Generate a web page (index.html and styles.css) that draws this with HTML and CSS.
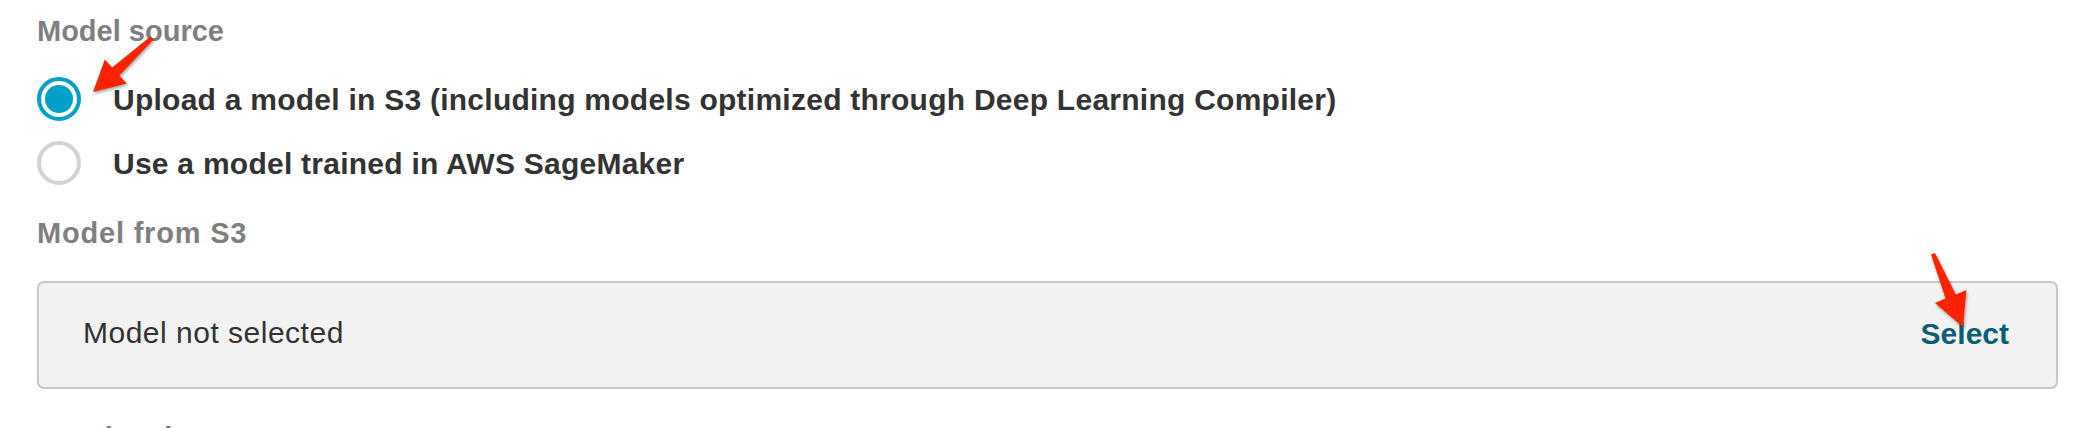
FILE: index.html
```html
<!DOCTYPE html>
<html lang="en">
<head>
<meta charset="utf-8">
<title>Model source</title>
<link rel="stylesheet" href="styles.css">
</head>
<body>
<div class="page">
  <div class="field-label">Model source</div>
  <div class="radio-group">
    <label class="radio-row">
      <span class="radio radio-checked"></span>
      <span class="radio-text">Upload a model in S3 (including models optimized through Deep Learning Compiler)</span>
    </label>
    <label class="radio-row">
      <span class="radio"></span>
      <span class="radio-text">Use a model trained in AWS SageMaker</span>
    </label>
  </div>
  <div class="field-label label-s3">Model from S3</div>
  <div class="picker">
    <span class="picker-value">Model not selected</span>
    <span class="picker-action">Select</span>
  </div>
  <div class="field-label label-next">Local path</div>
</div>
<svg class="annotations" width="2090" height="428" viewBox="0 0 2090 428" aria-hidden="true">
  <polygon class="arrow" points="153.5,39.6 119.4,75.5 126.7,83.6 93,92 104.8,59.4 112.1,67.5 150.5,36.6"/>
  <polygon class="arrow" points="1935.0,253.0 1955.8,294.4 1966.4,289.9 1963,327 1934.9,303.1 1945.6,298.5 1931.0,254.6"/>
</svg>
</body>
</html>
```
FILE: styles.css
```css
html, body {
  margin: 0;
  padding: 0;
  background: #ffffff;
  overflow: hidden;
}

body {
  position: relative;
  width: 2090px;
  height: 428px;
  font-family: "Liberation Sans", Arial, sans-serif;
  color: #333333;
}

.page {
  padding: 13px 32px 0 37px;
  display: flex;
  flex-direction: column;
}

.field-label {
  font-size: 29px;
  line-height: 36px;
  font-weight: 700;
  color: #7f7f7f;
}

.radio-group {
  margin-top: 19px;
  display: flex;
  flex-direction: column;
}

.radio-row {
  height: 64px;
  display: flex;
  align-items: center;
  gap: 32px;
}

.radio {
  width: 44px;
  height: 44px;
  flex: none;
  box-sizing: border-box;
  border-radius: 50%;
  border: 4px solid #d3d3d3;
  background: #ffffff;
  display: flex;
  align-items: center;
  justify-content: center;
  margin-top: -2px;
}

.radio-checked {
  border-color: #00a1c9;
}

.radio-checked::after {
  content: "";
  width: 28px;
  height: 28px;
  border-radius: 50%;
  background: #00a1c9;
}

.radio-text {
  font-size: 30px;
  line-height: 40px;
  font-weight: 700;
  color: #333333;
  letter-spacing: 0.25px;
}

.label-s3 {
  margin-top: 19px;
  letter-spacing: 0.8px;
}

.picker {
  margin-top: 30px;
  height: 108px;
  box-sizing: border-box;
  border: 2px solid #c8c8c8;
  border-radius: 7px;
  background: #f2f2f2;
  display: flex;
  align-items: center;
  justify-content: space-between;
  padding: 0 47px 5px 44px;
}

.picker-value {
  font-size: 30px;
  line-height: 40px;
  letter-spacing: 0.5px;
  color: #333333;
}

.picker-action {
  font-size: 30px;
  line-height: 40px;
  font-weight: 700;
  color: #0a5f78;
  padding-top: 3px;
}

.label-next {
  margin-top: 31px;
}

.annotations {
  position: absolute;
  top: 0;
  left: 0;
  pointer-events: none;
}

.arrow {
  fill: #ff2200;
  filter: drop-shadow(1px 2px 1.5px rgba(0, 0, 0, 0.35));
}
```
